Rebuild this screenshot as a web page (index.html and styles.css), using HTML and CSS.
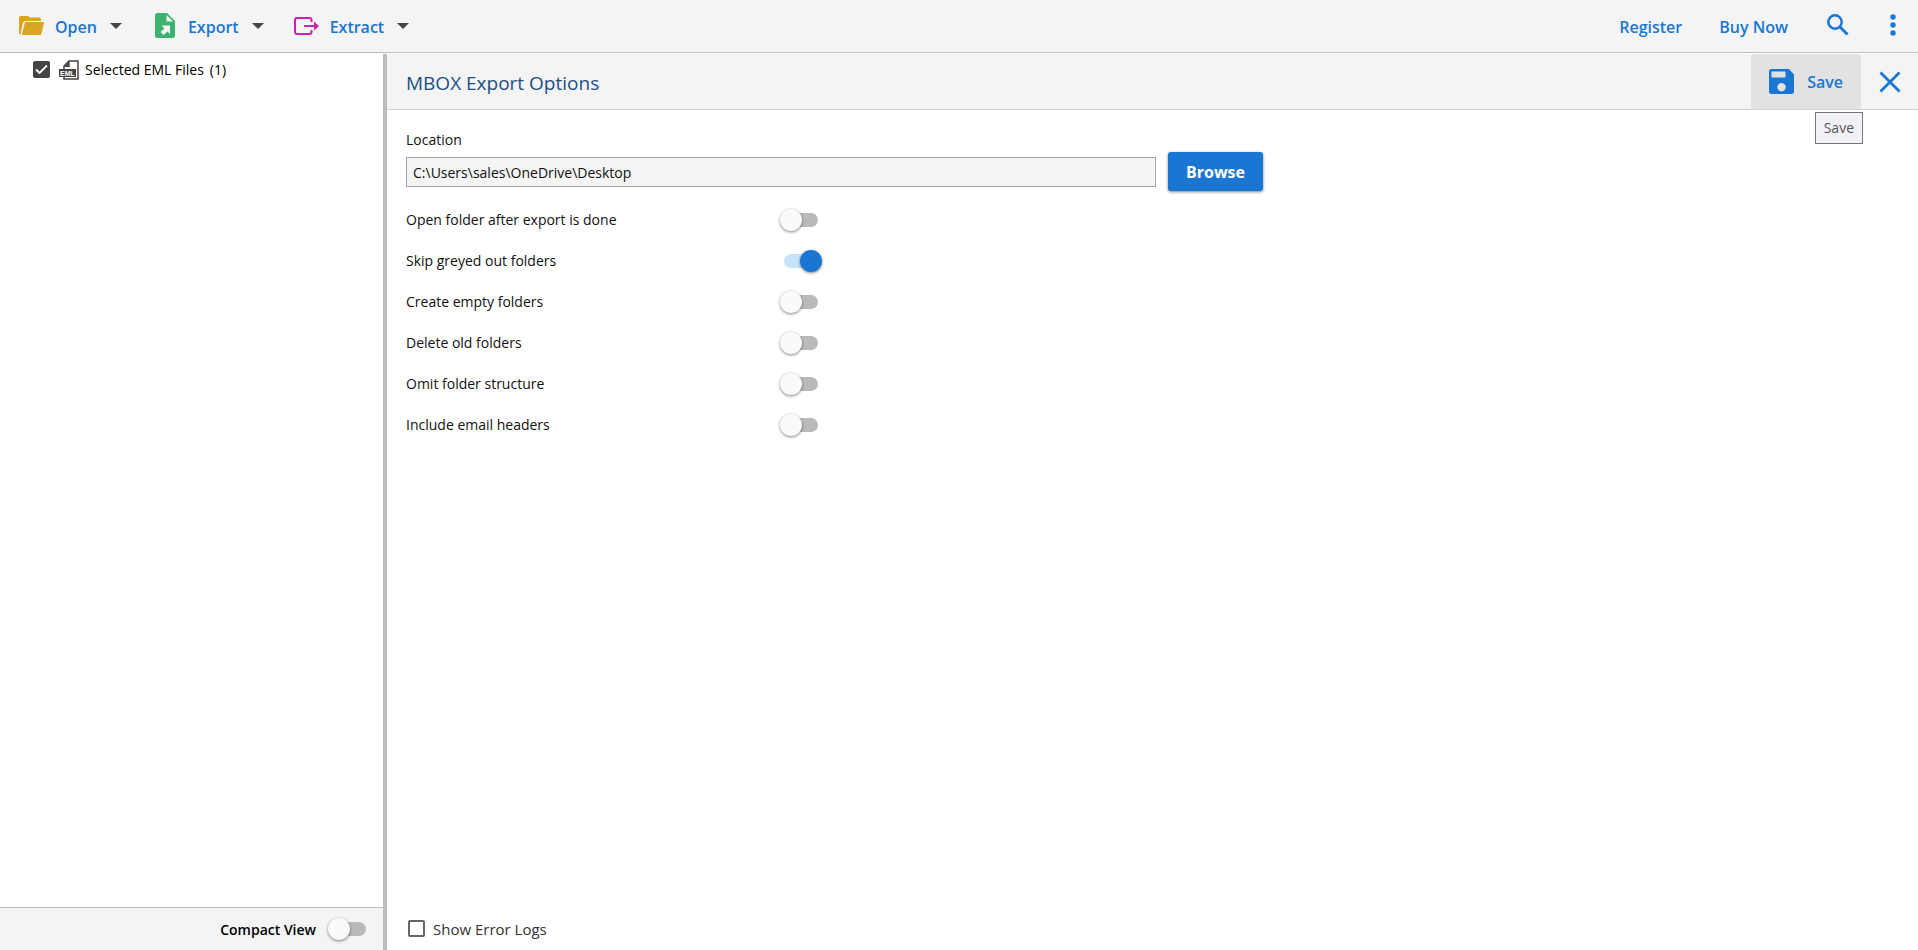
FILE: index.html
```html
<!DOCTYPE html>
<html lang="en">
<head>
<meta charset="utf-8">
<title>MBOX Export Options</title>
<link rel="stylesheet" href="styles.css">
</head>
<body>
<header class="toolbar">
  <nav class="menu">
    <button class="menu-button" type="button">
      <svg class="icon" width="26" height="20" viewBox="0 0 26 20"><path fill="#daa520" d="M1.500 0H9q1.200 0 1.500 1.500H20q2 0 2 2V5H6.500Q4.500 5 4 7L2 15v3.500Q0 18 0 16.500V1.500Q0 0 1.500 0z"/><path fill="#daa520" d="M6 6H24q1.200 0 1 1.200L22.500 17.500q-.4 1.500-2 1.500H2.700z"/></svg>
      <span class="menu-text">Open</span>
      <span class="caret"></span>
    </button>
    <button class="menu-button" type="button">
      <svg class="icon" width="26" height="26" viewBox="-3 0 26 26"><path fill="#3cb371" d="M2.500 0H12l8 8v14.500q0 2.500-2.500 2.500h-15Q0 25 0 22.500v-20Q0 0 2.500 0z"/><path fill="#f4f4f4" d="M11.500 2v6.500H18zM6.500 12.500H15V21l-2.500-2.500L8.500 22 5.500 19l4-3.500z"/></svg>
      <span class="menu-text">Export</span>
      <span class="caret"></span>
    </button>
    <button class="menu-button" type="button">
      <svg class="icon" width="26" height="18" viewBox="0 0 26 18"><path fill="none" stroke="#d31fae" stroke-width="2" d="M17.500 5V3q0-2-2-2H3Q1 1 1 3v12q0 2 2 2h12.500q2 0 2-2v-2M10 9h12"/><path fill="#d31fae" d="M20 4.500 25 9l-5 4.500z"/></svg>
      <span class="menu-text">Extract</span>
      <span class="caret"></span>
    </button>
  </nav>
  <div class="account">
    <a class="account-link" href="#register">Register</a>
    <a class="account-link" href="#buy">Buy Now</a>
    <button class="icon-button" type="button" aria-label="Search">
      <svg class="icon" width="22" height="22" viewBox="0 0 22 22"><path fill="none" stroke="#1976d2" stroke-width="2.800" d="M12.500 12.500 20.500 20.500"/><circle cx="8" cy="8" r="6.700" fill="none" stroke="#1976d2" stroke-width="2.500"/></svg>
    </button>
    <button class="icon-button" type="button" aria-label="More">
      <svg class="icon" width="6" height="22" viewBox="0 0 6 22"><g fill="#1976d2"><circle cx="3" cy="3" r="2.700"/><circle cx="3" cy="11" r="2.700"/><circle cx="3" cy="19" r="2.700"/></g></svg>
    </button>
  </div>
</header>
<div class="workspace">
  <aside class="sidebar">
    <div class="tree">
      <input class="tick" id="eml" type="checkbox" checked>
      <label class="tree-label" for="eml">
        <svg class="icon" width="20" height="20" viewBox="0 0 20 20"><path fill="none" stroke="#444" stroke-width="1.500" d="M5 9V6l5-5h9v18H5v-2"/><path fill="#444" d="M10.700 1v6H5zM0 9h17v8H0z"/><text class="badge" x="1" y="16">EML</text></svg>
        <span>Selected EML Files</span><span>(1)</span>
      </label>
    </div>
    <div class="sidebar-footer">
      <label class="compact-label" for="compact">Compact View</label>
      <input class="switch" id="compact" type="checkbox" role="switch">
    </div>
  </aside>
  <main class="panel">
    <div class="panel-header">
      <h1 class="panel-title">MBOX Export Options</h1>
      <div class="panel-actions">
        <div class="save-wrap">
          <button class="save-button" type="button">
            <svg class="icon" width="25" height="25" viewBox="0 0 25 25"><path fill="#1976d2" fill-rule="evenodd" d="M2.500 0H20l5 5.500v17q0 2.500-2.500 2.500h-20Q0 25 0 22.500v-20Q0 0 2.500 0zM2.500 2.500v6h14v-6zM12.500 14a4.200 4.200 0 1 0 .01 0z"/></svg>
            <span>Save</span>
          </button>
          <div class="tooltip" role="tooltip">Save</div>
        </div>
        <button class="icon-button close" type="button" aria-label="Close">
          <svg class="icon" width="22" height="22" viewBox="0 0 22 22"><path stroke="#1976d2" stroke-width="2.800" d="M1.500 1.500l19 19M20.500 1.500l-19 19"/></svg>
        </button>
      </div>
    </div>
    <form class="options">
      <label class="location-label" for="location">Location</label>
      <div class="location-row">
        <input class="path" id="location" type="text" value="C:\Users\sales\OneDrive\Desktop" readonly>
        <button class="browse" type="button">Browse</button>
      </div>
      <div class="option"><label for="o1">Open folder after export is done</label><input class="switch" id="o1" type="checkbox" role="switch"></div>
      <div class="option"><label for="o2">Skip greyed out folders</label><input class="switch" id="o2" type="checkbox" role="switch" checked></div>
      <div class="option"><label for="o3">Create empty folders</label><input class="switch" id="o3" type="checkbox" role="switch"></div>
      <div class="option"><label for="o4">Delete old folders</label><input class="switch" id="o4" type="checkbox" role="switch"></div>
      <div class="option"><label for="o5">Omit folder structure</label><input class="switch" id="o5" type="checkbox" role="switch"></div>
      <div class="option"><label for="o6">Include email headers</label><input class="switch" id="o6" type="checkbox" role="switch"></div>
    </form>
    <footer class="panel-footer">
      <input class="tick" id="logs" type="checkbox">
      <label class="logs-label" for="logs">Show Error Logs</label>
    </footer>
  </main>
</div>
</body>
</html>
```
FILE: styles.css
```css
* { box-sizing: border-box; }

body {
  margin: 0;
  height: 100vh;
  display: flex;
  flex-direction: column;
  font: 14px/20px "Open Sans", "Noto Sans", sans-serif;
  color: #111;
  background: #fff;
}

button, input { font: inherit; margin: 0; }
button { border: 0; padding: 0; background: none; color: #1976d2; }
.icon { display: block; flex: none; }

/* Top toolbar */
.toolbar {
  display: flex;
  justify-content: space-between;
  align-items: center;
  height: 53px;
  flex: none;
  padding: 0 20px 0 19px;
  background: #f4f4f4;
  border-bottom: 1px solid #bdbdbd;
}
.menu { display: flex; gap: 30px; }
.menu-button { display: flex; align-items: center; font-size: 16px; font-weight: 600; }
.menu-text { margin: 0 13px 0 10px; padding-top: 1px; }
.caret { border: 6px solid transparent; border-top-color: #444; border-bottom: 0; }
.account { display: flex; align-items: center; gap: 37px; }
.account-link {
  padding-top: 1px;
  font-size: 16px;
  font-weight: 600;
  color: #1976d2;
  text-decoration: none;
}
.icon-button { display: flex; padding: 0 2px 3px; }

.workspace { flex: 1; display: flex; min-height: 0; padding-top: 1px; }

/* Folder tree */
.sidebar {
  flex: none;
  width: 387px;
  display: flex;
  flex-direction: column;
  border-right: 4px solid #bdbdbd;
}
.tree { flex: 1; display: flex; align-items: flex-start; gap: 9px; padding: 6px 33px; }
.tree .tick { margin-top: 1px; }
.tree-label { display: flex; align-items: center; gap: 6px; color: #000; }
.badge { font: bold 7px/8px "Liberation Sans", sans-serif; fill: #fff; }
.sidebar-footer {
  display: flex;
  align-items: center;
  justify-content: flex-end;
  gap: 11px;
  height: 43px;
  padding-right: 12px;
  background: #f4f4f4;
  border-top: 1px solid #bdbdbd;
}
.compact-label { padding-top: 2px; font-weight: 600; color: #000; }

.tick {
  appearance: none;
  flex: none;
  width: 17px;
  height: 17px;
  border: 2px solid #666;
  border-radius: 2px;
  background: #fff;
}
.tick:checked {
  border-color: #444;
  background: #444 url("data:image/svg+xml,%3Csvg xmlns='http://www.w3.org/2000/svg' viewBox='0 0 13 13'%3E%3Cpath d='M1 6.500l3.500 3.500L12 2.500' fill='none' stroke='white' stroke-width='1.800'/%3E%3C/svg%3E") center / 13px no-repeat;
}

/* Sliding switches */
.switch {
  appearance: none;
  flex: none;
  display: flex;
  align-items: center;
  width: 44px;
  height: 24px;
  position: relative;
}
.switch::before {
  content: "";
  width: 34px;
  height: 14px;
  margin: 0 5px;
  border-radius: 7px;
  background: #bababa;
}
.switch::after {
  content: "";
  position: absolute;
  left: 1px;
  top: 1px;
  width: 22px;
  height: 22px;
  border-radius: 50%;
  background: #fafafa;
  box-shadow: 0 1px 3px rgba(0, 0, 0, 0.5);
}
.switch:checked::before { background: #c5e3fb; }
.switch:checked::after { left: 21px; background: #1976d2; }

/* Export panel */
.panel { flex: 1; min-width: 0; display: flex; flex-direction: column; }
.panel-header {
  flex: none;
  display: flex;
  justify-content: space-between;
  height: 56px;
  padding-left: 19px;
  background: #f4f4f4;
  border-bottom: 1px solid #d0d0d0;
}
.panel-title { margin: 0; font-size: 19px; line-height: 58px; font-weight: 400; color: #1b4f85; }
.panel-actions { display: flex; }
.save-wrap { position: relative; display: flex; }
.save-button {
  display: flex;
  align-items: center;
  gap: 13px;
  padding: 0 18px;
  border-radius: 3px;
  background: #e2e2e2;
  font-size: 16px;
  font-weight: 600;
}
.tooltip {
  position: absolute;
  top: 58px;
  right: -2px;
  padding: 5px 8px;
  border: 1px solid #767676;
  background: #f1f2f7;
  color: #575757;
}
.close { align-items: center; padding: 0 17px 0 18px; }

.options { flex: 1; display: flex; flex-direction: column; align-items: flex-start; padding: 20px 19px; }
.location-label { margin-bottom: 2px; }
.location-row { display: flex; align-items: center; gap: 12px; width: 857px; max-width: 100%; margin-bottom: 8px; }
.path {
  flex: 1;
  min-width: 0;
  height: 30px;
  padding: 1px 6px 0;
  border: 1px solid #a5a5a5;
  border-radius: 0;
  background: #f4f4f4;
  color: #111;
}
.browse {
  height: 39px;
  padding: 0 18px;
  border-radius: 3px;
  background: #1976d2;
  color: #fff;
  font-size: 16px;
  font-weight: 700;
  box-shadow: 0 1px 3px rgba(0, 0, 0, 0.5);
}
.option { display: flex; align-items: center; justify-content: space-between; width: 417px; height: 41px; }
.panel-footer { display: flex; align-items: center; gap: 8px; height: 44px; padding-left: 21px; }
.logs-label { padding-top: 2px; font-size: 15px; color: #333; }
```
